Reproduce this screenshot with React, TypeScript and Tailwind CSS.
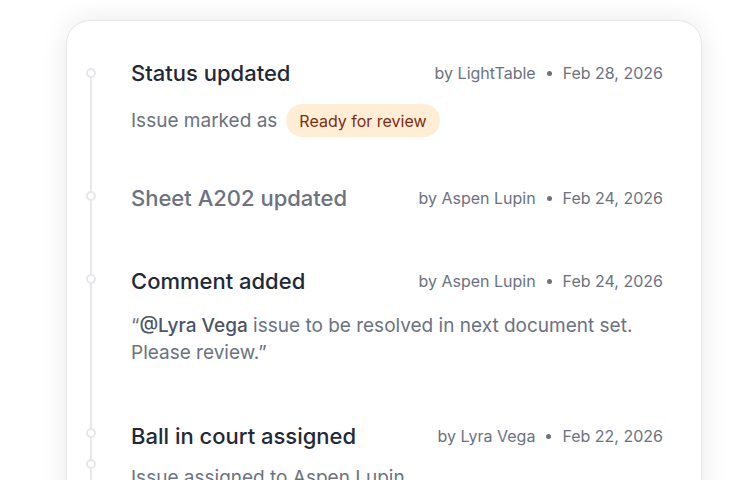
export default function App() {
  const Circle = () => (
    <div className="h-[10px] w-[10px] shrink-0 rounded-full border-2 border-[#e5e7eb] bg-white"></div>
  );

  const Meta = ({ by, date }: { by: string; date: string }) => (
    <div className="flex items-center gap-[11px] text-[16px] text-[#6b7280]">
      <span>by {by}</span>
      <span className="h-[5px] w-[5px] rounded-full bg-[#6b7280]"></span>
      <span>{date}</span>
    </div>
  );

  return (
    <div className="min-h-[560px] bg-white pl-[66px] pt-[20px] font-['Inter',sans-serif]">
      <div className="h-[560px] w-[636px] overflow-hidden rounded-[24px] border border-[#e5e7eb] bg-white pr-[38px] pt-[38px] shadow-[0_0_28px_rgba(0,0,0,0.09)]">
        {/* Status updated */}
        <div className="flex">
          <div className="flex w-[48px] flex-col items-center">
            <div className="h-[9px]"></div>
            <Circle />
            <div className="w-[2px] flex-1 bg-[#e5e7eb]"></div>
          </div>
          <div className="flex-1 pb-[47px] pl-[16px]">
            <div className="flex h-[28px] items-center justify-between">
              <h3 className="text-[22px] font-medium text-[#1f2937]">Status updated</h3>
              <Meta by="LightTable" date="Feb 28, 2026" />
            </div>
            <div className="mt-[17px] flex items-center gap-[9px] text-[19px] text-[#6b7280]">
              <span className="pt-[2px]">Issue marked as</span>
              <span className="flex h-[33px] items-center rounded-full bg-[#ffedd5] px-[13px] text-[16px] text-[#7c2d12]">
                Ready for review
              </span>
            </div>
          </div>
        </div>

        {/* Sheet updated */}
        <div className="flex">
          <div className="flex w-[48px] flex-col items-center">
            <div className="h-[7px] w-[2px] bg-[#e5e7eb]"></div>
            <Circle />
            <div className="w-[2px] flex-1 bg-[#e5e7eb]"></div>
          </div>
          <div className="flex-1 pb-[55px] pl-[16px]">
            <div className="flex h-[28px] items-center justify-between">
              <h3 className="text-[22px] font-medium text-[#6b7280]">Sheet A202 updated</h3>
              <Meta by="Aspen Lupin" date="Feb 24, 2026" />
            </div>
          </div>
        </div>

        {/* Comment added */}
        <div className="flex">
          <div className="flex w-[48px] flex-col items-center">
            <div className="h-[7px] w-[2px] bg-[#e5e7eb]"></div>
            <Circle />
            <div className="w-[2px] flex-1 bg-[#e5e7eb]"></div>
          </div>
          <div className="flex-1 pb-[56px] pl-[16px]">
            <div className="flex h-[28px] items-center justify-between">
              <h3 className="text-[22px] font-medium text-[#1f2937]">Comment added</h3>
              <Meta by="Aspen Lupin" date="Feb 24, 2026" />
            </div>
            <p className="mt-[17px] text-[19px] leading-[27px] text-[#6b7280]">
              “<span className="font-medium text-[#4b5563]">@Lyra Vega</span> issue to be resolved in next document set.
              <br />
              Please review.”
            </p>
          </div>
        </div>

        {/* Ball in court */}
        <div className="flex">
          <div className="flex w-[48px] flex-col items-center">
            <div className="h-[6px] w-[2px] bg-[#e5e7eb]"></div>
            <Circle />
            <div className="h-[21px] w-[2px] bg-[#e5e7eb]"></div>
            <Circle />
            <div className="w-[2px] flex-1 bg-[#e5e7eb]"></div>
          </div>
          <div className="flex-1 pb-[40px] pl-[16px]">
            <div className="flex h-[28px] items-center justify-between">
              <h3 className="text-[22px] font-medium text-[#1f2937]">Ball in court assigned</h3>
              <Meta by="Lyra Vega" date="Feb 22, 2026" />
            </div>
            <p className="mt-[14px] text-[19px] leading-[27px] text-[#6b7280]">Issue assigned to Aspen Lupin</p>
          </div>
        </div>
      </div>
    </div>
  );
}
